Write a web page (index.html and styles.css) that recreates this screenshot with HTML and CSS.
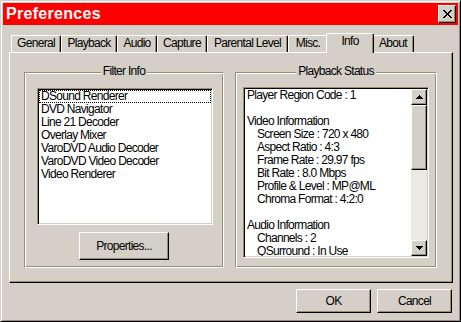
FILE: index.html
```html
<!doctype html>
<html>
<head>
<meta charset='UTF-8'>
<title>Preferences</title>
<link rel="stylesheet" href="styles.css">
</head>
<body>
<div class='window'>
<div class='titlebar'><span class='title'>Preferences</span><button class='btn close'><svg width='9' height='8' viewBox='0 0 9 8'><path d='M0 0h2v1h-2zM7 0h2v1h-2zM1 1h2v1h-2zM6 1h2v1h-2zM2 2h2v1h-2zM5 2h2v1h-2zM3 3h3v2h-3zM2 5h2v1h-2zM5 5h2v1h-2zM1 6h2v1h-2zM6 6h2v1h-2zM0 7h2v1h-2zM7 7h2v1h-2z' fill='#000'/></svg></button></div>
<div class='client'>
<div class='tabs'>
<div class='tab t-general'>General</div>
<div class='tab t-playback'>Playback</div>
<div class='tab t-audio'>Audio</div>
<div class='tab t-capture'>Capture</div>
<div class='tab t-parental'>Parental Level</div>
<div class='tab t-misc'>Misc.</div>
<div class='tab t-info selected'>Info</div>
<div class='tab t-about'>About</div>
</div>
<div class='panel'>
<div class='group filter-group'>
<div class='group-title'><span>Filter Info</span></div>
<div class='list filter-list'>
<div class='item focused'>DSound Renderer</div>
<div class='item'>DVD Navigator</div>
<div class='item'>Line 21 Decoder</div>
<div class='item'>Overlay Mixer</div>
<div class='item'>VaroDVD Audio Decoder</div>
<div class='item'>VaroDVD Video Decoder</div>
<div class='item'>Video Renderer</div>
</div>
<button class='btn properties'>Properties...</button>
</div>
<div class='group status-group'>
<div class='group-title'><span>Playback Status</span></div>
<div class='list status-list'>
<div class='lines'>
<div class='line'>Player Region Code : 1</div>
<div class='line'>&nbsp;</div>
<div class='line'>Video Information</div>
<div class='line ind'>Screen Size : 720 x 480</div>
<div class='line ind'>Aspect Ratio : 4:3</div>
<div class='line ind'>Frame Rate : 29.97 fps</div>
<div class='line ind'>Bit Rate : 8.0 Mbps</div>
<div class='line ind'>Profile &amp; Level : MP@ML</div>
<div class='line ind'>Chroma Format : 4:2:0</div>
<div class='line'>&nbsp;</div>
<div class='line'>Audio Information</div>
<div class='line ind'>Channels : 2</div>
<div class='line ind'>QSurround : In Use</div>
</div>
<div class='scrollbar'>
<div class='btn sb-btn'><svg width='7' height='4' viewBox='0 0 7 4'><path d='M3 0h1v1h1v1h1v1h1v1h-7v-1h1v-1h1v-1h1z' fill='#000'/></svg></div>
<div class='btn sb-thumb'></div>
<div class='sb-track'></div>
<div class='btn sb-btn'><svg width='7' height='4' viewBox='0 0 7 4'><path d='M0 0h7v1h-1v1h-1v1h-1v1h-1v-1h-1v-1h-1v-1h-1z' fill='#000'/></svg></div>
</div>
</div>
</div>
</div>
<div class='button-row'>
<button class='btn dlg-btn'>OK</button>
<button class='btn dlg-btn'>Cancel</button>
</div>
</div>
</div>
</body>
</html>
```

FILE: styles.css
```css
body
{
margin: 0;
font-family: "Liberation Sans", Arial, sans-serif;
font-size: 12px;
letter-spacing: -0.7px;
color: #000;
background-color: #d4d0c8;
}

.window
{
box-sizing: border-box;
width: 461px;
height: 322px;
padding: 2px;
background-color: #d4d0c8;
border: 1px solid;
border-color: #d4d0c8 #000 #000 #d4d0c8;
box-shadow: inset 1px 1px #fff, inset -1px -1px #9c8c70;
}

.titlebar
{
display: flex;
align-items: center;
justify-content: space-between;
height: 22px;
padding: 0 2px 0 3px;
background-color: #f00;
}

.title
{
color: #fff;
font-weight: bold;
font-size: 16px;
letter-spacing: 0.3px;
line-height: 22px;
}

.btn
{
box-sizing: border-box;
padding: 0;
font: inherit;
letter-spacing: inherit;
color: #000;
background-color: #d4d0c8;
border: 1px solid;
border-color: #fff #000 #000 #fff;
box-shadow: inset -1px -1px #9c8c70;
}

.close
{
display: flex;
align-items: center;
justify-content: center;
width: 18px;
height: 18px;
}

.client
{
margin: 8px 5px 0 6px;
}

.tabs
{
display: flex;
align-items: flex-end;
height: 19px;
padding-left: 2px;
}

.tab
{
box-sizing: border-box;
height: 17px;
line-height: 15px;
text-align: center;
border-top: 1px solid #fff;
border-left: 1px solid #fff;
border-right: 1px solid #000;
border-radius: 2px 2px 0 0;
box-shadow: inset -1px 0 #9c8c70;
}

.t-general { width: 50px; }
.t-playback { width: 56px; }
.t-audio { width: 40px; }
.t-capture { width: 50px; }
.t-parental { width: 81px; }
.t-misc { width: 40px; }
.t-info { width: 44px; }
.t-about { width: 42px; }

.tab.selected
{
position: relative;
z-index: 1;
height: 20px;
width: 48px;
margin: 0 -2px -1px -2px;
background-color: #d4d0c8;
}

.panel
{
box-sizing: border-box;
display: flex;
gap: 11px;
height: 231px;
padding: 19px 0 0 14px;
border-top: 1px solid #fff;
border-left: 1px solid #fff;
border-right: 1px solid #000;
border-bottom: 1px solid #000;
box-shadow: inset -1px -1px #9c8c70;
}

.group
{
position: relative;
box-sizing: border-box;
height: 196px;
border-top: 1px solid #9c8c70;
border-left: 1px solid #9c8c70;
border-right: 1px solid #fff;
border-bottom: 1px solid #fff;
box-shadow: inset 1px 1px #fff, inset -1px -1px #9c8c70;
}

.filter-group
{
width: 200px;
}

.status-group
{
width: 202px;
}

.group-title
{
position: absolute;
top: -9px;
left: 0;
right: 0;
line-height: 15px;
text-align: center;
}

.group-title span
{
padding: 0 2px;
background-color: #d4d0c8;
}

.list
{
box-sizing: border-box;
background-color: #fff;
border: 1px solid;
border-color: #9c8c70 #fff #fff #9c8c70;
box-shadow: inset 1px 1px #000, inset -1px -1px #d4d0c8;
padding: 1px;
}

.filter-list
{
width: 176px;
height: 137px;
margin: 15px 0 0 12px;
}

.item
{
box-sizing: border-box;
height: 13px;
line-height: 11px;
padding-left: 1px;
border: 1px solid transparent;
white-space: nowrap;
}

.item.focused
{
border: 1px dotted #000;
}

.properties
{
display: block;
width: 90px;
height: 28px;
margin: 7px auto 0 auto;
}

.status-list
{
display: flex;
width: 186px;
height: 171px;
margin: 14px 0 0 7px;
}

.lines
{
flex: 1;
overflow: hidden;
padding-left: 2px;
}

.line
{
height: 13px;
line-height: 13px;
white-space: nowrap;
}

.line.ind
{
padding-left: 10px;
}

.scrollbar
{
display: flex;
flex-direction: column;
width: 16px;
}

.sb-btn
{
display: flex;
align-items: center;
justify-content: center;
height: 16px;
}

.sb-thumb
{
height: 65px;
}

.sb-track
{
flex: 1;
background-color: #ebe9e4;
}

.button-row
{
display: flex;
justify-content: flex-end;
gap: 6px;
margin-top: 6px;
padding-right: 1px;
}

.dlg-btn
{
width: 75px;
height: 24px;
}
```
